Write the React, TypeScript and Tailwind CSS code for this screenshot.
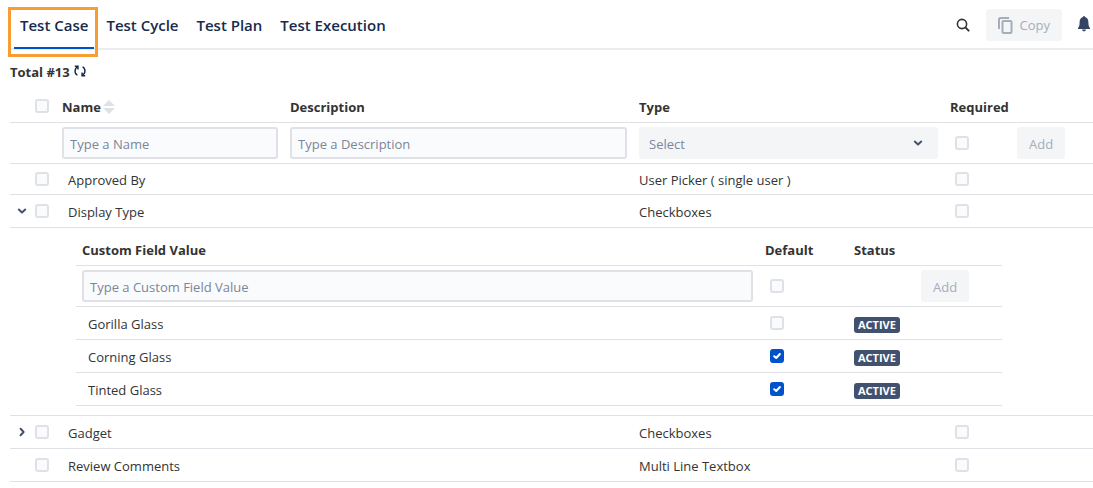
import React, { useState } from 'react';

interface CustomField {
  name: string;
  type: string;
  expandable?: boolean;
  expanded?: boolean;
}

interface FieldValue {
  name: string;
  isDefault: boolean;
}

const TABS = ['Test Case', 'Test Cycle', 'Test Plan', 'Test Execution'];

const FIELDS: CustomField[] = [
  { name: 'Approved By', type: 'User Picker ( single user )' },
  { name: 'Display Type', type: 'Checkboxes', expandable: true, expanded: true },
  { name: 'Gadget', type: 'Checkboxes', expandable: true },
  { name: 'Review Comments', type: 'Multi Line Textbox' },
];

const VALUES: FieldValue[] = [
  { name: 'Gorilla Glass', isDefault: false },
  { name: 'Corning Glass', isDefault: true },
  { name: 'Tinted Glass', isDefault: true },
];

const inputClass =
  'block h-8 w-full rounded-[3px] border-2 border-[#dfe1e6] bg-[#fafbfc] px-1.5 pt-0.5 text-[13px] text-[#333] placeholder:text-[#7a869a] outline-none focus:border-[#4c9aff]';

const Chevron: React.FC<{ open: boolean }> = ({ open }) => (
  <svg width="10" height="10" viewBox="0 0 10 10" fill="none" stroke="#42526e" strokeWidth="2" strokeLinecap="round" strokeLinejoin="round">
    <path d={open ? 'M1.8 3.6 5 6.6 8.2 3.6' : 'M3.6 1.8 6.6 5 3.6 8.2'} />
  </svg>
);

const Checkbox: React.FC<{ label: string; defaultChecked?: boolean }> = ({ label, defaultChecked }) => (
  <span className="relative block size-3.5">
    <input
      type="checkbox"
      aria-label={label}
      defaultChecked={defaultChecked}
      className="peer block size-3.5 appearance-none rounded-[3px] border-2 border-[#dfe1e6] bg-[#fafbfc] checked:border-[#0052cc] checked:bg-[#0052cc]"
    />
    <svg className="pointer-events-none absolute inset-0 hidden peer-checked:block" width="14" height="14" viewBox="0 0 14 14" fill="none" stroke="#fff" strokeWidth="2" strokeLinecap="round" strokeLinejoin="round">
      <path d="M4.2 7.2 6.2 9 9.9 5" />
    </svg>
  </span>
);

const AddButton: React.FC = () => (
  <button disabled className="block h-8 rounded-[3px] bg-[#f4f5f7] px-3 pt-0.5 text-[13px] text-[#a5adba]">
    Add
  </button>
);

const ValuesTable: React.FC = () => (
  <table className="w-full table-fixed">
    <colgroup>
      <col />
      <col className="w-[89px]" />
      <col className="w-[67px]" />
      <col className="w-[87px]" />
    </colgroup>
    <thead>
      <tr className="h-[33px] border-b border-[#dfe1e6] text-left">
        <th className="px-1.5 pt-0.5">Custom Field Value</th>
        <th className="px-1.5 pt-0.5">Default</th>
        <th className="px-1.5 pt-0.5">Status</th>
        <th />
      </tr>
    </thead>
    <tbody>
      <tr className="h-[41px] border-b border-[#dfe1e6]">
        <td className="px-1.5">
          <input type="text" aria-label="Custom Field Value" placeholder="Type a Custom Field Value" className={inputClass} />
        </td>
        <td className="pl-[11px]"><Checkbox label="Default" /></td>
        <td />
        <td className="px-1.5"><AddButton /></td>
      </tr>
      {VALUES.map((value) => (
        <tr key={value.name} className="h-[33px] border-b border-[#dfe1e6]">
          <td className="px-3 pt-0.5">{value.name}</td>
          <td className="pl-[11px]">
            <Checkbox label={`${value.name} default`} defaultChecked={value.isDefault} />
          </td>
          <td className="px-1.5 pt-1">
            <span className="block w-fit rounded-[3px] bg-[#42526e] px-1 text-[11px] leading-4 font-bold text-white">ACTIVE</span>
          </td>
          <td />
        </tr>
      ))}
    </tbody>
  </table>
);

const FieldRow: React.FC<{ field: CustomField; first: boolean }> = ({ field, first }) => {
  const [open, setOpen] = useState(!!field.expanded);

  return (
    <>
      <tr className={`${first ? 'h-[31px]' : 'h-[33px]'} border-b border-[#dfe1e6]`}>
        <td>
          <div className="flex items-center pl-[7px]">
            <div className="w-[18px]">
              {field.expandable && (
                <button aria-label={`Toggle ${field.name}`} aria-expanded={open} onClick={() => setOpen(!open)} className="block">
                  <Chevron open={open} />
                </button>
              )}
            </div>
            <Checkbox label={`Select ${field.name}`} />
          </div>
        </td>
        <td className="px-3 pt-0.5">{field.name}</td>
        <td />
        <td className="px-1.5 pt-0.5">{field.type}</td>
        <td className="pl-[11px]"><Checkbox label={`${field.name} required`} /></td>
        <td />
      </tr>
      {open && (
        <tr className="border-b border-[#dfe1e6]">
          <td colSpan={6} className="pt-[5px] pr-[91px] pb-[9px] pl-[66px]">
            <ValuesTable />
          </td>
        </tr>
      )}
    </>
  );
};

const App: React.FC = () => {
  const [activeTab, setActiveTab] = useState('Test Case');

  return (
    <div className="min-h-screen bg-white pt-2 pl-2.5 font-['Open_Sans','Segoe_UI',sans-serif] text-[13px] leading-5 text-[#333]">
      <header className="flex h-[42px] items-stretch justify-between border-b-2 border-[#ebecf0] pl-1">
        <nav className="flex gap-1.5">
          {TABS.map((tab) => (
            <button
              key={tab}
              onClick={() => setActiveTab(tab)}
              className={`relative -mb-px border-b-2 px-1.5 pb-1.5 text-[15px] font-semibold text-[#172b4d] ${activeTab === tab ? 'border-[#0052cc]' : 'border-transparent'}`}
            >
              {tab}
              {activeTab === tab && <span className="pointer-events-none absolute -top-px -right-1 -bottom-2.5 -left-1.5 border-3 border-[#f79d32]" />}
            </button>
          ))}
        </nav>
        <div className="flex items-start gap-4 pt-px pr-[3px]">
          <button aria-label="Search" className="mt-[9px]">
            <svg width="14" height="14" viewBox="0 0 14 14" fill="none" stroke="#333" strokeWidth="1.6" strokeLinecap="round">
              <circle cx="6" cy="6" r="4.6" />
              <path d="M9.6 9.6 12.6 12.6" strokeWidth="2" />
            </svg>
          </button>
          <button disabled className="flex h-8 items-center gap-[7px] rounded-[3px] bg-[#f4f5f7] px-3 text-[13px] text-[#a5adba]">
            <svg width="15" height="17" viewBox="0 0 15 17" fill="none" stroke="#a5adba" strokeWidth="2">
              <path d="M1 12V2.5Q1 1 2.5 1H11" />
              <rect x="4.5" y="4" width="9" height="12" rx="1" />
            </svg>
            Copy
          </button>
          <button aria-label="Notifications" className="mt-[7px]">
            <svg width="12" height="16" viewBox="0 0 12 16" fill="#344563">
              <path d="M6 0a1 1 0 0 1 1 1C9.5 1.6 10.4 3.8 10.4 6.2 10.4 9.4 10.8 10.6 12 12v1H0v-1C1.2 10.6 1.6 9.4 1.6 6.2 1.6 3.8 2.5 1.6 5 1a1 1 0 0 1 1-1ZM4 13.6h4a2 1.8 0 0 1-4 0Z" />
            </svg>
          </button>
        </div>
      </header>

      <main>
        <div className="flex items-center gap-1 pt-3 pb-[9px] font-bold">
          Total #13
          <button aria-label="Refresh" className="-mt-0.5">
            <svg width="12" height="12" viewBox="0 0 12 12" fill="none" stroke="#172b4d" strokeWidth="1.4">
              <path d="M3.8 1.8C.2 3.2.2 8.6 3.4 10.2M.8 1.3H4v3.2M8.2 10.2c3.6-1.4 3.6-6.8.4-8.4M11.2 10.7H8V7.5" />
            </svg>
          </button>
        </div>
        <table className="w-full table-fixed">
          <colgroup>
            <col className="w-[46px]" />
            <col className="w-[228px]" />
            <col />
            <col className="w-[311px]" />
            <col className="w-[67px]" />
            <col className="w-[82px]" />
          </colgroup>
          <thead>
            <tr className="h-[31px] border-b border-[#dfe1e6] text-left">
              <th className="pl-[25px]"><Checkbox label="Select all" /></th>
              <th className="px-1.5 pt-0.5">
                <div className="flex items-center gap-0.5">
                  Name
                  <svg width="12" height="14" viewBox="0 0 12 14" fill="#dfe1e6">
                    <path d="M6 0 12 6H0ZM0 8h12L6 14Z" />
                  </svg>
                </div>
              </th>
              <th className="px-1.5 pt-0.5">Description</th>
              <th className="px-1.5 pt-0.5">Type</th>
              <th className="px-1.5 pt-0.5">Required</th>
              <th />
            </tr>
          </thead>
          <tbody>
            <tr className="h-[41px] border-b border-[#dfe1e6]">
              <td />
              <td className="px-1.5"><input type="text" aria-label="Name" placeholder="Type a Name" className={inputClass} /></td>
              <td className="px-1.5"><input type="text" aria-label="Description" placeholder="Type a Description" className={inputClass} /></td>
              <td className="px-1.5">
                <div className="relative">
                  <select aria-label="Type" className="block h-8 w-full appearance-none rounded-[3px] bg-[#f4f5f7] px-2.5 pt-0.5 text-[13px] text-[#7a869a] outline-none">
                    <option>Select</option>
                    <option>Checkboxes</option>
                    <option>Multi Line Textbox</option>
                  </select>
                  <span className="pointer-events-none absolute top-[11px] right-[15px]"><Chevron open /></span>
                </div>
              </td>
              <td className="pl-[11px]"><Checkbox label="Required" /></td>
              <td className="px-1.5"><AddButton /></td>
            </tr>
            {FIELDS.map((field, index) => <FieldRow key={field.name} field={field} first={index === 0} />)}
          </tbody>
        </table>
      </main>
    </div>
  );
};

export default App;
